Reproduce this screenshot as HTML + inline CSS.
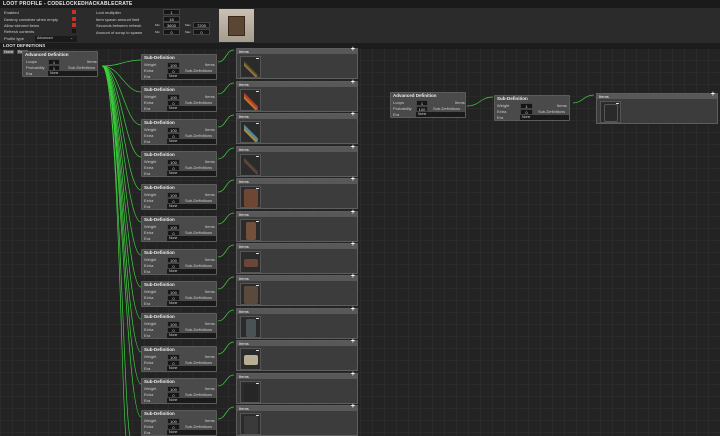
<!DOCTYPE html><html style="width:720px;height:436px;overflow:hidden"><head><meta charset="utf-8"><style>
*{margin:0;padding:0;box-sizing:border-box}
body{width:720px;height:436px;overflow:hidden;background:#232323;font-family:"Liberation Sans",sans-serif;color:#ddd;position:relative;
background-image:linear-gradient(#2a2a2a 1px,transparent 1px),linear-gradient(90deg,#2a2a2a 1px,transparent 1px);background-size:12px 12px}
.a{position:absolute}
.hdr{left:0;top:0;width:720px;height:8px;background:#1a1a1a;font-size:5px;font-weight:bold;padding:1px 3px;color:#e8e8e8;letter-spacing:.2px}
.set{left:0;top:8px;width:720px;height:35px;background:#2b2b2b}
.t{position:absolute;font-size:4px;color:#ccc;white-space:nowrap;line-height:5px}
.bx{position:absolute;background:#151515;border:0.5px solid #444;font-size:4px;color:#ddd;text-align:center;line-height:5px;height:6px}
.red{position:absolute;width:4px;height:4px;background:#c8301f}
.dk{position:absolute;width:4px;height:4px;background:#151515}
.ld{left:0;top:43px;width:720px;height:6px;background:#1c1c1c;font-size:4.5px;font-weight:bold;padding:0 3px;line-height:6px;color:#ddd}
.nd{position:absolute;width:76px;height:26px;background:#4a4a4a;border:0.5px solid #5c5c5c;border-radius:1px}
.nd .ti{position:absolute;left:2px;top:0;font-size:4.5px;font-weight:bold;color:#eee;line-height:6px}
.dd{position:absolute;background:#1a1a1a;height:5px;font-size:3.5px;line-height:5px;padding-left:2px;color:#ccc}
.it{position:absolute;width:122px;height:31px;background:#3c3c3c;border:0.5px solid #5e5e5e}
.it .h{height:5px;background:#585858;font-size:4px;line-height:5px;padding-left:2px;color:#eee;position:relative}
.it .h:after{content:"+";position:absolute;right:2px;top:-2px;font-size:7px;font-weight:bold;color:#fff}
.sl{position:absolute;left:3px;top:7px;width:21px;height:22px;background:#2b2b2b;border:0.5px solid #555}
.sl i{position:absolute;left:3px;top:2px;width:14px;height:18px;border-radius:2px}
.sl b{position:absolute;right:1px;top:1px;width:3px;height:1px;background:#ddd}
</style></head><body>
<div class="a hdr">LOOT PROFILE - CODELOCKEDHACKABLECRATE</div>
<div class="a set">
<span class="t" style="left:4px;top:2px">Enabled</span><span class="red" style="left:72px;top:2px"></span>
<span class="t" style="left:4px;top:9px">Destroy container when empty</span><span class="red" style="left:72px;top:9px"></span>
<span class="t" style="left:4px;top:15px">Allow skinned items</span><span class="red" style="left:72px;top:15px"></span>
<span class="t" style="left:4px;top:21px">Refresh contents</span><span class="dk" style="left:72px;top:21px"></span>
<span class="t" style="left:4px;top:28px">Profile type</span><span class="dd" style="left:35px;top:28px;width:42px;height:6px">Advanced<span style="position:absolute;right:4px">⌄</span></span>
<span class="t" style="left:96px;top:2px">Loot multiplier</span><span class="bx" style="left:163px;top:1px;width:17px">1</span>
<span class="t" style="left:96px;top:9px">Item spawn amount limit</span><span class="bx" style="left:163px;top:8px;width:17px">18</span>
<span class="t" style="left:96px;top:15px">Seconds between refresh</span><span class="t" style="left:155px;top:15px;font-size:3px">Min</span><span class="bx" style="left:163px;top:14px;width:17px">3600</span><span class="t" style="left:185px;top:15px;font-size:3px">Max</span><span class="bx" style="left:193px;top:14px;width:17px">7200</span>
<span class="t" style="left:96px;top:22px">Amount of scrap to spawn</span><span class="t" style="left:155px;top:22px;font-size:3px">Min</span><span class="bx" style="left:163px;top:21px;width:17px">0</span><span class="t" style="left:185px;top:22px;font-size:3px">Max</span><span class="bx" style="left:193px;top:21px;width:17px">0</span>
<div class="a" style="left:219px;top:1px;width:35px;height:33px;background:linear-gradient(#c9c2b4,#a49c8c)"><div class="a" style="left:9px;top:7px;width:17px;height:20px;background:#5a4632;border:1px solid #3a2a1c"></div></div>
</div>
<div class="a ld">LOOT DEFINITIONS</div>
<span class="a" style="left:3px;top:50px;font-size:3.5px;background:#555;padding:0 1px;color:#eee">Home</span>
<span class="a" style="left:17px;top:50px;font-size:3.5px;background:#555;padding:0 1px;color:#eee">Reset</span>
<svg class="a" style="left:0;top:0;overflow:hidden" width="720" height="436">
<g stroke="#3fd13f" stroke-width="0.7" fill="none">
<path d="M102 66 C120 66 125 60 141 60"/><path d="M102 66 C120 66 125 92 141 92"/><path d="M102 66 C120 66 125 125 141 125"/><path d="M102 66 C120 66 125 157 141 157"/><path d="M102 66 C120 66 125 190 141 190"/><path d="M102 66 C120 66 125 222 141 222"/><path d="M102 66 C120 66 125 255 141 255"/><path d="M102 66 C120 66 125 287 141 287"/><path d="M102 66 C120 66 125 319 141 319"/><path d="M102 66 C120 66 125 352 141 352"/><path d="M102 66 C120 66 125 384 141 384"/><path d="M102 66 C120 66 125 417 141 417"/><path d="M102 66 C118 66 122 420 126 436"/><path d="M102 66 C118 66 124 420 130 436"/>
<path d="M218 62 C226 62 226 50 234 50"/><path d="M218 94 C226 94 226 83 234 83"/><path d="M218 127 C226 127 226 115 234 115"/><path d="M218 159 C226 159 226 148 234 148"/><path d="M218 192 C226 192 226 180 234 180"/><path d="M218 224 C226 224 226 213 234 213"/><path d="M218 257 C226 257 226 245 234 245"/><path d="M218 289 C226 289 226 277 234 277"/><path d="M218 321 C226 321 226 310 234 310"/><path d="M218 354 C226 354 226 342 234 342"/><path d="M218 386 C226 386 226 375 234 375"/><path d="M218 419 C226 419 226 407 234 407"/>
<path d="M467 106 C480 106 480 97 493 97"/><path d="M573 103 C582 103 584 95 594 95"/>
</g></svg>
<div class="nd" style="left:22px;top:51px"><span class="ti">Advanced Definition</span><span class="t" style="left:3px;top:7px">Loops</span><span class="bx" style="left:25px;top:7px;width:12px">1</span><span class="t" style="left:64px;top:7px">Items</span><span class="t" style="left:3px;top:13px">Probability</span><span class="bx" style="left:25px;top:13px;width:12px">1</span><span class="t" style="left:45px;top:13px">Sub-Definitions</span><span class="t" style="left:3px;top:19px">Era</span><span class="dd" style="left:25px;top:19px;width:49px">None</span></div>
<div class="nd" style="left:390px;top:92px"><span class="ti">Advanced Definition</span><span class="t" style="left:2px;top:7px">Loops</span><span class="bx" style="left:25px;top:7px;width:12px">1</span><span class="t" style="left:64px;top:7px">Items</span><span class="t" style="left:2px;top:13px">Probability</span><span class="bx" style="left:25px;top:13px;width:12px">100</span><span class="t" style="left:42px;top:13px">Sub-Definitions</span><span class="t" style="left:2px;top:19px">Era</span><span class="dd" style="left:25px;top:19px;width:49px">None</span></div>
<div class="nd" style="left:494px;top:95px"><span class="ti">Sub-Definition</span><span class="t" style="left:2px;top:7px">Weight</span><span class="bx" style="left:25px;top:7px;width:13px">1</span><span class="t" style="left:62px;top:7px">Items</span><span class="t" style="left:2px;top:13px">Extra</span><span class="bx" style="left:25px;top:13px;width:13px">0</span><span class="t" style="left:43px;top:13px">Sub-Definitions</span><span class="t" style="left:2px;top:19px">Era</span><span class="dd" style="left:25px;top:19px;width:49px">None</span></div>
<div class="it" style="left:596px;top:93px"><div class="h">Items</div><div class="sl"><i style="background:#2a2a2a;border:1px solid #555"></i><b></b></div></div>

<div class="nd" style="left:141px;top:54px"><span class="ti">Sub-Definition</span><span class="t" style="left:2px;top:7px">Weight</span><span class="bx" style="left:25px;top:7px;width:13px">100</span><span class="t" style="left:63px;top:7px">Items</span><span class="t" style="left:2px;top:13px">Extra</span><span class="bx" style="left:25px;top:13px;width:13px">0</span><span class="t" style="left:43px;top:13px">Sub-Definitions</span><span class="t" style="left:2px;top:19px">Era</span><span class="dd" style="left:25px;top:19px;width:49px">None</span></div>
<div class="nd" style="left:141px;top:86px"><span class="ti">Sub-Definition</span><span class="t" style="left:2px;top:7px">Weight</span><span class="bx" style="left:25px;top:7px;width:13px">100</span><span class="t" style="left:63px;top:7px">Items</span><span class="t" style="left:2px;top:13px">Extra</span><span class="bx" style="left:25px;top:13px;width:13px">0</span><span class="t" style="left:43px;top:13px">Sub-Definitions</span><span class="t" style="left:2px;top:19px">Era</span><span class="dd" style="left:25px;top:19px;width:49px">None</span></div>
<div class="nd" style="left:141px;top:119px"><span class="ti">Sub-Definition</span><span class="t" style="left:2px;top:7px">Weight</span><span class="bx" style="left:25px;top:7px;width:13px">100</span><span class="t" style="left:63px;top:7px">Items</span><span class="t" style="left:2px;top:13px">Extra</span><span class="bx" style="left:25px;top:13px;width:13px">0</span><span class="t" style="left:43px;top:13px">Sub-Definitions</span><span class="t" style="left:2px;top:19px">Era</span><span class="dd" style="left:25px;top:19px;width:49px">None</span></div>
<div class="nd" style="left:141px;top:151px"><span class="ti">Sub-Definition</span><span class="t" style="left:2px;top:7px">Weight</span><span class="bx" style="left:25px;top:7px;width:13px">100</span><span class="t" style="left:63px;top:7px">Items</span><span class="t" style="left:2px;top:13px">Extra</span><span class="bx" style="left:25px;top:13px;width:13px">0</span><span class="t" style="left:43px;top:13px">Sub-Definitions</span><span class="t" style="left:2px;top:19px">Era</span><span class="dd" style="left:25px;top:19px;width:49px">None</span></div>
<div class="nd" style="left:141px;top:184px"><span class="ti">Sub-Definition</span><span class="t" style="left:2px;top:7px">Weight</span><span class="bx" style="left:25px;top:7px;width:13px">100</span><span class="t" style="left:63px;top:7px">Items</span><span class="t" style="left:2px;top:13px">Extra</span><span class="bx" style="left:25px;top:13px;width:13px">0</span><span class="t" style="left:43px;top:13px">Sub-Definitions</span><span class="t" style="left:2px;top:19px">Era</span><span class="dd" style="left:25px;top:19px;width:49px">None</span></div>
<div class="nd" style="left:141px;top:216px"><span class="ti">Sub-Definition</span><span class="t" style="left:2px;top:7px">Weight</span><span class="bx" style="left:25px;top:7px;width:13px">100</span><span class="t" style="left:63px;top:7px">Items</span><span class="t" style="left:2px;top:13px">Extra</span><span class="bx" style="left:25px;top:13px;width:13px">0</span><span class="t" style="left:43px;top:13px">Sub-Definitions</span><span class="t" style="left:2px;top:19px">Era</span><span class="dd" style="left:25px;top:19px;width:49px">None</span></div>
<div class="nd" style="left:141px;top:249px"><span class="ti">Sub-Definition</span><span class="t" style="left:2px;top:7px">Weight</span><span class="bx" style="left:25px;top:7px;width:13px">100</span><span class="t" style="left:63px;top:7px">Items</span><span class="t" style="left:2px;top:13px">Extra</span><span class="bx" style="left:25px;top:13px;width:13px">0</span><span class="t" style="left:43px;top:13px">Sub-Definitions</span><span class="t" style="left:2px;top:19px">Era</span><span class="dd" style="left:25px;top:19px;width:49px">None</span></div>
<div class="nd" style="left:141px;top:281px"><span class="ti">Sub-Definition</span><span class="t" style="left:2px;top:7px">Weight</span><span class="bx" style="left:25px;top:7px;width:13px">100</span><span class="t" style="left:63px;top:7px">Items</span><span class="t" style="left:2px;top:13px">Extra</span><span class="bx" style="left:25px;top:13px;width:13px">0</span><span class="t" style="left:43px;top:13px">Sub-Definitions</span><span class="t" style="left:2px;top:19px">Era</span><span class="dd" style="left:25px;top:19px;width:49px">None</span></div>
<div class="nd" style="left:141px;top:313px"><span class="ti">Sub-Definition</span><span class="t" style="left:2px;top:7px">Weight</span><span class="bx" style="left:25px;top:7px;width:13px">100</span><span class="t" style="left:63px;top:7px">Items</span><span class="t" style="left:2px;top:13px">Extra</span><span class="bx" style="left:25px;top:13px;width:13px">0</span><span class="t" style="left:43px;top:13px">Sub-Definitions</span><span class="t" style="left:2px;top:19px">Era</span><span class="dd" style="left:25px;top:19px;width:49px">None</span></div>
<div class="nd" style="left:141px;top:346px"><span class="ti">Sub-Definition</span><span class="t" style="left:2px;top:7px">Weight</span><span class="bx" style="left:25px;top:7px;width:13px">100</span><span class="t" style="left:63px;top:7px">Items</span><span class="t" style="left:2px;top:13px">Extra</span><span class="bx" style="left:25px;top:13px;width:13px">0</span><span class="t" style="left:43px;top:13px">Sub-Definitions</span><span class="t" style="left:2px;top:19px">Era</span><span class="dd" style="left:25px;top:19px;width:49px">None</span></div>
<div class="nd" style="left:141px;top:378px"><span class="ti">Sub-Definition</span><span class="t" style="left:2px;top:7px">Weight</span><span class="bx" style="left:25px;top:7px;width:13px">100</span><span class="t" style="left:63px;top:7px">Items</span><span class="t" style="left:2px;top:13px">Extra</span><span class="bx" style="left:25px;top:13px;width:13px">0</span><span class="t" style="left:43px;top:13px">Sub-Definitions</span><span class="t" style="left:2px;top:19px">Era</span><span class="dd" style="left:25px;top:19px;width:49px">None</span></div>
<div class="nd" style="left:141px;top:410px"><span class="ti">Sub-Definition</span><span class="t" style="left:2px;top:7px">Weight</span><span class="bx" style="left:25px;top:7px;width:13px">100</span><span class="t" style="left:63px;top:7px">Items</span><span class="t" style="left:2px;top:13px">Extra</span><span class="bx" style="left:25px;top:13px;width:13px">0</span><span class="t" style="left:43px;top:13px">Sub-Definitions</span><span class="t" style="left:2px;top:19px">Era</span><span class="dd" style="left:25px;top:19px;width:49px">None</span></div>

<div class="it" style="left:236px;top:48px"><div class="h">Items</div><div class="sl"><i style="background:linear-gradient(45deg,transparent 35%,#b08a3a 35%,#222 55%,transparent 55%)"></i><b></b></div></div>
<div class="it" style="left:236px;top:81px"><div class="h">Items</div><div class="sl"><i style="background:linear-gradient(45deg,transparent 35%,#c08a3a 35%,#b0201a 55%,transparent 55%)"></i><b></b></div></div>
<div class="it" style="left:236px;top:113px"><div class="h">Items</div><div class="sl"><i style="background:linear-gradient(45deg,transparent 35%,#c08a3a 35%,#2a8ab0 55%,transparent 55%)"></i><b></b></div></div>
<div class="it" style="left:236px;top:146px"><div class="h">Items</div><div class="sl"><i style="background:linear-gradient(45deg,transparent 42%,#6a4a3a 42%,#4a3a34 55%,transparent 55%)"></i><b></b></div></div>
<div class="it" style="left:236px;top:178px"><div class="h">Items</div><div class="sl"><i style="background:#6e4634"></i><b></b></div></div>
<div class="it" style="left:236px;top:211px"><div class="h">Items</div><div class="sl"><i style="background:#74503c;left:5px;width:10px"></i><b></b></div></div>
<div class="it" style="left:236px;top:243px"><div class="h">Items</div><div class="sl"><i style="background:#6a4636;top:7px;height:8px"></i><b></b></div></div>
<div class="it" style="left:236px;top:275px"><div class="h">Items</div><div class="sl"><i style="background:#5a4a3e"></i><b></b></div></div>
<div class="it" style="left:236px;top:308px"><div class="h">Items</div><div class="sl"><i style="background:#4a5256;left:5px;width:10px"></i><b></b></div></div>
<div class="it" style="left:236px;top:340px"><div class="h">Items</div><div class="sl"><i style="background:#b8ae94;top:6px;height:10px"></i><b></b></div></div>
<div class="it" style="left:236px;top:373px"><div class="h">Items</div><div class="sl"><i style="background:#262626"></i><b></b></div></div>
<div class="it" style="left:236px;top:405px"><div class="h">Items</div><div class="sl"><i style="background:#3a3a3a"></i><b></b></div></div>
</body></html>
